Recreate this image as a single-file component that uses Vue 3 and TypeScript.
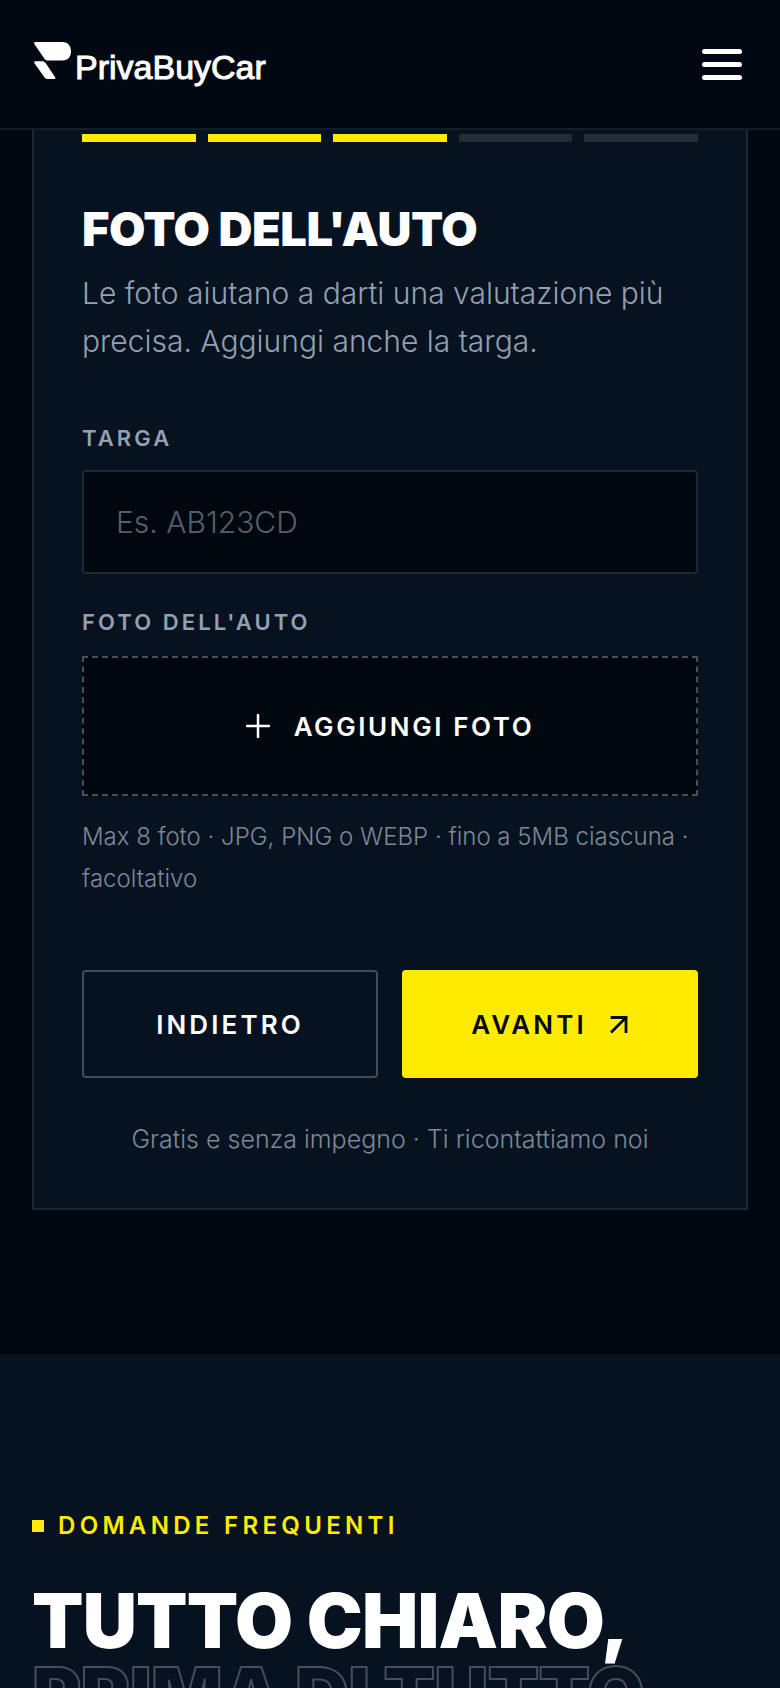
<script setup lang="ts">
import { ref } from 'vue'

const totalSteps = 5
const currentStep = ref(3)
const plate = ref('')

function goBack(): void {
  currentStep.value = Math.max(1, currentStep.value - 1)
}

function goNext(): void {
  currentStep.value = Math.min(totalSteps, currentStep.value + 1)
}
</script>

<template>
  <div class="page">
    <header class="topbar">
      <a class="brand" href="#" aria-label="PrivaBuyCar">
        <svg class="brand-mark" viewBox="0 0 38 38" aria-hidden="true">
          <path d="M1.5 0H28.5C34 0 37 4 37 9.3S34 18.6 28.5 18.6H14.5C12.6 18.6 11.4 18 10.3 16.4L.5 2.2C-.2 1.1.2 0 1.5 0Z" />
          <path d="M1.5 19.2H7.8C9.6 19.2 10.8 19.8 11.8 21.3L21 34.9C21.8 36.1 21.4 37.1 20 37.1H14.2C12.4 37.1 11.2 36.5 10.2 35L.6 21.4C-.2 20.2.2 19.2 1.5 19.2Z" />
        </svg>
        <span class="brand-name">PrivaBuyCar</span>
      </a>
      <button class="menu" type="button" aria-label="Menu">
        <span></span><span></span><span></span>
      </button>
    </header>

    <main>
      <section class="form-section">
        <form class="card" @submit.prevent="goNext">
          <div class="steps">
            <span
              v-for="step in totalSteps"
              :key="step"
              class="step"
              :class="{ done: step <= currentStep }"
            ></span>
          </div>

          <h2 class="title">FOTO DELL'AUTO</h2>
          <p class="intro">Le foto aiutano a darti una valutazione più precisa. Aggiungi anche la targa.</p>

          <label class="label" for="plate">TARGA</label>
          <input id="plate" v-model="plate" class="field" type="text" placeholder="Es. AB123CD" />

          <label class="label" for="photos">FOTO DELL'AUTO</label>
          <button id="photos" class="dropzone" type="button">
            <svg class="plus" viewBox="0 0 24 24" aria-hidden="true">
              <path d="M12 1V23M1 12H23" />
            </svg>
            <span>AGGIUNGI FOTO</span>
          </button>
          <p class="hint">Max 8 foto · JPG, PNG o WEBP · fino a 5MB ciascuna · facoltativo</p>

          <div class="actions">
            <button class="btn outline" type="button" @click="goBack">INDIETRO</button>
            <button class="btn primary" type="submit">
              <span>AVANTI</span>
              <svg class="arrow" viewBox="0 0 20 20" aria-hidden="true">
                <path d="M3 3.5H17V17.5M17 3.5L3 17.5" />
              </svg>
            </button>
          </div>
          <p class="note">Gratis e senza impegno · Ti ricontattiamo noi</p>
        </form>
      </section>

      <section class="faq">
        <p class="eyebrow">DOMANDE FREQUENTI</p>
        <h2 class="headline">
          TUTTO CHIARO,
          <span class="ghost">PRIMA DI TUTTO</span>
        </h2>
      </section>
    </main>
  </div>
</template>

<style>
body {
  margin: 0;
  background: #06121f;
}
</style>

<style scoped>
.page {
  height: 100vh;
  overflow: hidden;
  color: #fff;
  background: #06121f;
  font-family: Inter, "Liberation Sans", sans-serif;
  font-weight: 300;
}

.page *,
.page *::before {
  box-sizing: border-box;
}

.topbar {
  display: flex;
  align-items: center;
  justify-content: space-between;
  height: 130px;
  padding: 0 38px 0 34px;
  background: #020812;
  border-bottom: 2px solid #141c26;
}

.brand {
  display: flex;
  align-items: flex-start;
  gap: 3px;
  color: #fff;
  text-decoration: none;
}

.brand-mark {
  width: 38px;
  height: 38px;
  fill: currentColor;
}

.brand-name {
  padding-top: 6px;
  font: 400 34px/38px "Liberation Sans", sans-serif;
  -webkit-text-stroke: 1px currentColor;
}

.menu {
  display: flex;
  flex-direction: column;
  gap: 8px;
  width: 40px;
  padding: 0;
  background: none;
  border: 0;
}

.menu span {
  height: 5px;
  border-radius: 3px;
  background: #fff;
}

.form-section {
  padding: 0 32px 144px;
  background: #01070e;
}

.card {
  padding: 4px 48px 48px;
  background: #06121f;
  border: 2px solid #1c2733;
  border-top: 0;
}

.steps {
  display: grid;
  grid-template-columns: repeat(5, 1fr);
  gap: 12px;
}

.step {
  height: 8px;
  background: #222b36;
}

.step.done {
  background: #ffeb00;
}

.title {
  margin: 63px 0 0;
  font-size: 47px;
  font-weight: 900;
  line-height: 48px;
  letter-spacing: -0.01em;
}

.intro {
  margin: 16px 0 57px;
  color: #94a0b2;
  font-size: 30px;
  line-height: 48px;
}

.label {
  display: block;
  margin-bottom: 16px;
  color: #94a0b2;
  font-size: 22px;
  font-weight: 600;
  line-height: 32px;
  letter-spacing: 0.14em;
}

.field {
  display: block;
  width: 100%;
  height: 104px;
  margin-bottom: 32px;
  padding: 0 32px;
  color: #fff;
  background: #01070e;
  border: 2px solid #1c2733;
  border-radius: 4px;
  font: 300 30px Inter, "Liberation Sans", sans-serif;
}

.field::placeholder {
  color: #565f6c;
  opacity: 1;
}

.dropzone {
  display: flex;
  align-items: center;
  justify-content: center;
  gap: 24px;
  width: 100%;
  height: 140px;
  margin-top: 18px;
  color: #fff;
  background: #01070e;
  border: 2px dashed #4a4f56;
  font: 600 26px Inter, "Liberation Sans", sans-serif;
  letter-spacing: 0.1em;
}

.plus {
  width: 24px;
  height: 24px;
  fill: none;
  stroke: currentColor;
  stroke-width: 2.5;
  stroke-linecap: round;
}

.hint {
  margin: 20px 0 70px;
  color: #7d8899;
  font-size: 24px;
  line-height: 42px;
}

.actions {
  display: grid;
  grid-template-columns: 1fr 1fr;
  gap: 24px;
}

.btn {
  display: flex;
  align-items: center;
  justify-content: center;
  gap: 22px;
  height: 108px;
  border: 2px solid #414c59;
  border-radius: 4px;
  font: 600 26px Inter, "Liberation Sans", sans-serif;
  letter-spacing: 0.12em;
}

.outline {
  color: #fff;
  background: transparent;
}

.primary {
  color: #01070e;
  background: #ffeb00;
  border-color: #ffeb00;
}

.arrow {
  width: 20px;
  height: 20px;
  fill: none;
  stroke: currentColor;
  stroke-width: 2.8;
  stroke-linecap: square;
}

.note {
  margin: 40px 0 0;
  color: #7d8899;
  font-size: 25px;
  line-height: 42px;
  text-align: center;
}

.faq {
  padding: 152px 32px 0;
}

.eyebrow {
  display: flex;
  align-items: center;
  gap: 14px;
  margin: 0;
  color: #ffeb00;
  font-size: 24px;
  font-weight: 600;
  line-height: 40px;
  letter-spacing: 0.18em;
}

.eyebrow::before {
  width: 12px;
  height: 12px;
  background: currentColor;
  content: "";
}

.headline {
  margin: 38px 0 0;
  font-size: 75px;
  font-weight: 900;
  line-height: 74px;
  letter-spacing: -0.01em;
  white-space: nowrap;
}

.ghost {
  display: block;
  color: transparent;
  -webkit-text-stroke: 2px #444e5a;
}
</style>
